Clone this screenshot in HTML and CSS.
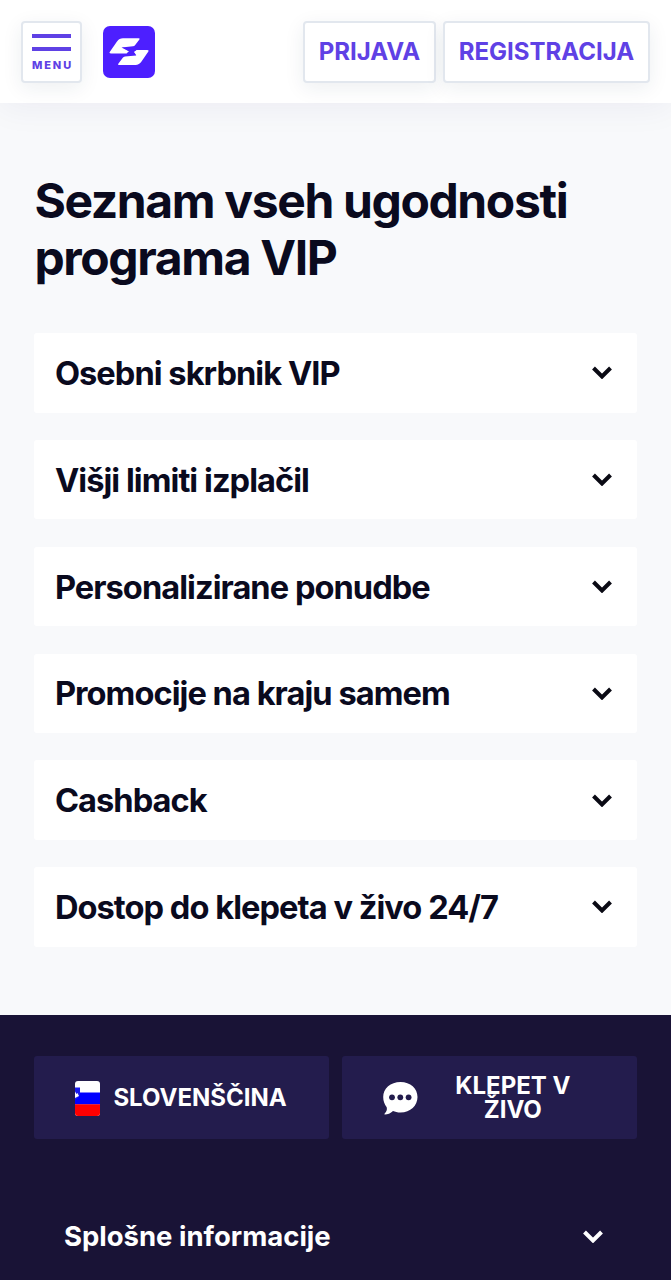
FILE: index.html
```html
<!DOCTYPE html>
<html lang="sl">
<head>
  <meta charset="UTF-8" />
  <meta name="viewport" content="width=device-width, initial-scale=1.0"/>
  <title>Program VIP</title>
  <link rel="stylesheet" href="styles.css">
</head>
<body>
  <header class="header">
    <button class="btn menu-btn" type="button">
      <span class="menu-line"></span>
      <span class="menu-line"></span>
      <span class="menu-text">MENU</span>
    </button>
    <a class="logo" href="#">
      <svg width="52" height="52" viewBox="0 0 52 52">
        <rect width="52" height="52" rx="7" fill="#4d1fff"/>
        <path d="M20 12.300H35.500Q37.300 12.300 36.400 13.500L32 19.300Q31.300 20.200 30 20.300L18.500 21.600L26.300 25.500L23.500 27.500H8Q5.700 27.500 6.900 25.800L14 15.500Q16.300 12.300 20 12.300Z" fill="#fff"/>
        <path d="M33.500 23.900H44.300Q46.400 23.900 45.200 25.700L38.500 35.500Q36.200 38.900 32.500 38.900H16Q14.400 38.900 15.300 37.700L19.800 31.700Q20.500 30.800 22 30.600L33.300 29.400L30.800 26Z" fill="#fff"/>
        <path d="M19 21L28.300 23.700L33.200 23.900L30.500 25.700L33 28.800L24 27.300L26 25.300Z" fill="#4d1fff"/>
      </svg>
    </a>
    <nav class="auth">
      <a class="btn auth-btn login" href="#">PRIJAVA</a>
      <a class="btn auth-btn register" href="#">REGISTRACIJA</a>
    </nav>
  </header>

  <main class="benefits">
    <h1>Seznam vseh ugodnosti programa VIP</h1>
    <div class="accordion">
      <div class="item">
        <h2>Osebni skrbnik VIP</h2>
        <svg class="chevron" viewBox="0 0 20 13"><path d="M1.500 2L10 10.500L18.500 2"/></svg>
      </div>
      <div class="item">
        <h2>Višji limiti izplačil</h2>
        <svg class="chevron" viewBox="0 0 20 13"><path d="M1.500 2L10 10.500L18.500 2"/></svg>
      </div>
      <div class="item">
        <h2>Personalizirane ponudbe</h2>
        <svg class="chevron" viewBox="0 0 20 13"><path d="M1.500 2L10 10.500L18.500 2"/></svg>
      </div>
      <div class="item">
        <h2>Promocije na kraju samem</h2>
        <svg class="chevron" viewBox="0 0 20 13"><path d="M1.500 2L10 10.500L18.500 2"/></svg>
      </div>
      <div class="item">
        <h2>Cashback</h2>
        <svg class="chevron" viewBox="0 0 20 13"><path d="M1.500 2L10 10.500L18.500 2"/></svg>
      </div>
      <div class="item">
        <h2>Dostop do klepeta v živo 24/7</h2>
        <svg class="chevron" viewBox="0 0 20 13"><path d="M1.500 2L10 10.500L18.500 2"/></svg>
      </div>
    </div>
  </main>

  <footer class="footer">
    <div class="footer-buttons">
      <button class="footer-btn language" type="button">
        <svg class="flag" width="25" height="35" viewBox="0 0 25 35">
          <clipPath id="flagShape"><rect width="25" height="35" rx="3"/></clipPath>
          <g clip-path="url(#flagShape)">
            <rect width="25" height="35" fill="#fff"/>
            <rect y="11.500" width="25" height="12" fill="#00f"/>
            <rect y="23.300" width="25" height="12" fill="#f00"/>
            <path d="M0 6.500H5V12Q5 16 0 19Z" fill="#1a1aee"/>
            <path d="M0 10.500L1.500 13L2.500 12L4 15L0 17Z" fill="#fff"/>
          </g>
        </svg>
        <span>SLOVENŠČINA</span>
      </button>
      <button class="footer-btn chat" type="button">
        <svg width="35" height="33" viewBox="0 0 35 33">
          <path d="M17.500 0C27.500 0 34.500 6.500 34.500 15S27.500 30.500 17.500 30.500C14.500 30.500 12 29.900 10 29C7.500 31.500 4.500 32.500 2 32.500C1.400 32.500 1.300 31.900 1.700 31.500C3.600 29.500 4.300 27.500 3.700 25.200C1.500 22.600 .2 19 .2 15C.2 6.500 7.500 0 17.500 0Z" fill="#fff"/>
          <circle cx="9" cy="15.300" r="2.900" fill="#231c4d"/>
          <circle cx="17.300" cy="15.300" r="2.900" fill="#231c4d"/>
          <circle cx="25.600" cy="15.300" r="2.900" fill="#231c4d"/>
        </svg>
        <span>KLEPET V ŽIVO</span>
      </button>
    </div>
    <div class="footer-section">
      <h3>Splošne informacije</h3>
      <svg class="chevron" viewBox="0 0 20 13"><path d="M1.500 2L10 10.500L18.500 2"/></svg>
    </div>
  </footer>
</body>
</html>
```

FILE: styles.css
```css
* {
  box-sizing: border-box;
}

body {
  margin: 0;
  height: 1280px;
  overflow: hidden;
  display: flex;
  flex-direction: column;
  background: #f8f9fb;
  color: #0a0a1e;
  font-family: Inter, sans-serif;
}

h1,
h2,
h3 {
  margin: 0;
  font-weight: 650;
}

button {
  font-family: inherit;
}

.header {
  display: flex;
  align-items: center;
  flex-shrink: 0;
  height: 103px;
  padding: 0 21px;
  background: #fff;
  box-shadow: 0 4px 34px rgba(30, 20, 100, 0.06);
}

.btn {
  display: flex;
  align-items: center;
  height: 62px;
  background: #fff;
  border: 2px solid #e2e7ee;
  border-radius: 4px;
  color: #5f41e5;
  box-shadow: 0 5px 20px rgba(30, 50, 80, 0.08);
}

.menu-btn {
  flex-direction: column;
  width: 61px;
  padding: 11px 0 0;
}

.menu-line {
  flex-shrink: 0;
  width: 39px;
  height: 4px;
  margin-bottom: 9px;
  background: #5f41e5;
}

.menu-text {
  margin: -1px -2px 0 0;
  font-size: 11px;
  line-height: 12px;
  font-weight: 800;
  letter-spacing: 1.9px;
}

.logo {
  height: 52px;
  margin-left: 21px;
}

.auth {
  display: flex;
  gap: 7px;
  margin-left: auto;
}

.auth-btn {
  justify-content: center;
  font-size: 24px;
  font-weight: 650;
  text-decoration: none;
}

.login {
  width: 133px;
}

.register {
  width: 207px;
}

.benefits {
  flex-shrink: 0;
  height: 912px;
  padding: 69px 34.400px 0;
}

h1 {
  font-size: 48px;
  line-height: 57px;
  letter-spacing: -1.37px;
}

.accordion {
  display: flex;
  flex-direction: column;
  gap: 27.500px;
  margin-top: 47.300px;
}

.item {
  display: flex;
  align-items: center;
  justify-content: space-between;
  height: 79.300px;
  padding: 0 24.500px 0 20.500px;
  background: #fff;
  border-radius: 3px;
}

h2 {
  font-size: 32.600px;
  letter-spacing: -0.95px;
}

.chevron {
  width: 20px;
  height: 13px;
  fill: none;
  stroke: #0a0a14;
  stroke-width: 4;
}

.footer {
  flex: 1;
  padding: 41px 34.400px 0;
  background: #191336;
  color: #fff;
}

.footer-buttons {
  display: flex;
  gap: 13px;
}

.footer-btn {
  display: flex;
  align-items: center;
  flex: 1 1 0;
  height: 83px;
  padding: 1px 41px 0;
  background: #231c4d;
  border: 0;
  border-radius: 3px;
  color: #fff;
  font-size: 24px;
  line-height: 24px;
  font-weight: 650;
}

.language {
  gap: 13px;
}

.chat span {
  flex: 1;
  margin-left: 12px;
  text-align: center;
}

.footer-section {
  display: flex;
  align-items: center;
  justify-content: space-between;
  margin-top: 62px;
  height: 70px;
  padding: 0 33.500px 0 29.500px;
}

h3 {
  font-size: 27.500px;
}

.footer-section .chevron {
  stroke: #fff;
}
```
